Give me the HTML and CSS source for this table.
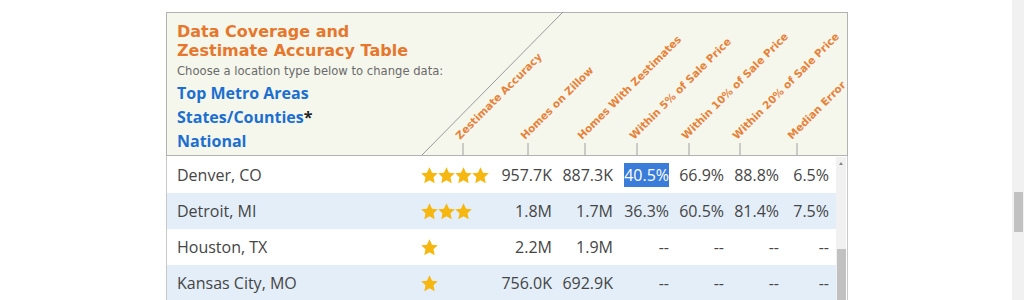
FILE: index.html
```html
<!DOCTYPE html>
<html lang="en">
<head>
<meta charset="utf-8">
<title>Data Coverage and Zestimate Accuracy Table</title>
<link rel="stylesheet" href="styles.css">
</head>
<body>
<div class="page">
  <main class="main">
    <section class="widget">
      <header class="head">
        <div class="intro">
          <h1 class="title">Data Coverage and<br>Zestimate Accuracy Table</h1>
          <p class="hint">Choose a location type below to change data:</p>
          <ul class="types">
            <li><a href="#">Top Metro Areas</a></li>
            <li><a href="#">States/Counties</a><span class="ast">*</span></li>
            <li><a href="#">National</a></li>
          </ul>
        </div>
        <svg class="colheads" width="680" height="142" viewBox="0 0 680 142">
          <line class="diag" x1="396" y1="-1" x2="255" y2="142"/>
          <g class="ticks">
            <line x1="296" y1="130" x2="296" y2="142"/>
            <line x1="361" y1="130" x2="361" y2="142"/>
            <line x1="418" y1="130" x2="418" y2="142"/>
            <line x1="470" y1="130" x2="470" y2="142"/>
            <line x1="522" y1="130" x2="522" y2="142"/>
            <line x1="573" y1="130" x2="573" y2="142"/>
            <line x1="630" y1="130" x2="630" y2="142"/>
          </g>
          <g class="labels">
            <text transform="translate(293 127) rotate(-45)">Zestimate Accuracy</text>
            <text transform="translate(358 127) rotate(-45)">Homes on Zillow</text>
            <text transform="translate(415 127) rotate(-45)">Homes With Zestimates</text>
            <text transform="translate(467 127) rotate(-45)">Within 5% of Sale Price</text>
            <text transform="translate(519 127) rotate(-45)">Within 10% of Sale Price</text>
            <text transform="translate(570 127) rotate(-45)">Within 20% of Sale Price</text>
            <text transform="translate(625 127) rotate(-45)">Median Error</text>
          </g>
        </svg>
      </header>
      <div class="body">
        <div class="rows">
          <div class="row">
            <span class="name">Denver, CO</span>
            <span class="stars">
              <svg class="star" viewBox="0 0 16 16"><polygon points="8,0.3 10.4,5.3 15.8,5.9 11.8,9.6 12.9,15.2 8,12.5 3.1,15.2 4.2,9.6 0.2,5.9 5.6,5.3"/></svg><svg class="star" viewBox="0 0 16 16"><polygon points="8,0.3 10.4,5.3 15.8,5.9 11.8,9.6 12.9,15.2 8,12.5 3.1,15.2 4.2,9.6 0.2,5.9 5.6,5.3"/></svg><svg class="star" viewBox="0 0 16 16"><polygon points="8,0.3 10.4,5.3 15.8,5.9 11.8,9.6 12.9,15.2 8,12.5 3.1,15.2 4.2,9.6 0.2,5.9 5.6,5.3"/></svg><svg class="star" viewBox="0 0 16 16"><polygon points="8,0.3 10.4,5.3 15.8,5.9 11.8,9.6 12.9,15.2 8,12.5 3.1,15.2 4.2,9.6 0.2,5.9 5.6,5.3"/></svg>
            </span>
            <span class="num">957.7K</span>
            <span class="num">887.3K</span>
            <span class="num"><span class="sel">40.5%</span></span>
            <span class="num">66.9%</span>
            <span class="num">88.8%</span>
            <span class="num">6.5%</span>
          </div>
          <div class="row alt">
            <span class="name">Detroit, MI</span>
            <span class="stars">
              <svg class="star" viewBox="0 0 16 16"><polygon points="8,0.3 10.4,5.3 15.8,5.9 11.8,9.6 12.9,15.2 8,12.5 3.1,15.2 4.2,9.6 0.2,5.9 5.6,5.3"/></svg><svg class="star" viewBox="0 0 16 16"><polygon points="8,0.3 10.4,5.3 15.8,5.9 11.8,9.6 12.9,15.2 8,12.5 3.1,15.2 4.2,9.6 0.2,5.9 5.6,5.3"/></svg><svg class="star" viewBox="0 0 16 16"><polygon points="8,0.3 10.4,5.3 15.8,5.9 11.8,9.6 12.9,15.2 8,12.5 3.1,15.2 4.2,9.6 0.2,5.9 5.6,5.3"/></svg>
            </span>
            <span class="num">1.8M</span>
            <span class="num">1.7M</span>
            <span class="num">36.3%</span>
            <span class="num">60.5%</span>
            <span class="num">81.4%</span>
            <span class="num">7.5%</span>
          </div>
          <div class="row">
            <span class="name">Houston, TX</span>
            <span class="stars">
              <svg class="star" viewBox="0 0 16 16"><polygon points="8,0.3 10.4,5.3 15.8,5.9 11.8,9.6 12.9,15.2 8,12.5 3.1,15.2 4.2,9.6 0.2,5.9 5.6,5.3"/></svg>
            </span>
            <span class="num">2.2M</span>
            <span class="num">1.9M</span>
            <span class="num">--</span>
            <span class="num">--</span>
            <span class="num">--</span>
            <span class="num">--</span>
          </div>
          <div class="row alt">
            <span class="name">Kansas City, MO</span>
            <span class="stars">
              <svg class="star" viewBox="0 0 16 16"><polygon points="8,0.3 10.4,5.3 15.8,5.9 11.8,9.6 12.9,15.2 8,12.5 3.1,15.2 4.2,9.6 0.2,5.9 5.6,5.3"/></svg>
            </span>
            <span class="num">756.0K</span>
            <span class="num">692.9K</span>
            <span class="num">--</span>
            <span class="num">--</span>
            <span class="num">--</span>
            <span class="num">--</span>
          </div>
        </div>
        <div class="vscroll">
          <span class="arrow"></span>
          <span class="thumb"></span>
        </div>
      </div>
    </section>
  </main>
  <div class="pagescroll"><span class="pthumb"></span></div>
</div>
</body>
</html>
```

FILE: styles.css
```css
* { box-sizing: border-box; }
html, body { margin: 0; padding: 0; background: #fff; }
body { font-family: "Open Sans", "DejaVu Sans", sans-serif; color: #444; }

.page {
  display: flex;
  height: 300px;
  overflow: hidden;
}
.main {
  flex: 1;
  padding: 12px 0 0 166px;
}

.widget {
  width: 682px;
  border-left: 1px solid #c8c8c8;
  border-right: 1px solid #c8c8c8;
  height: 300px;
}

.head {
  position: relative;
  height: 144px;
  margin: 0 -1px;
  border: 1px solid #b2b2b2;
  background: #f5f7ed;
  padding: 9px 0 0 10px;
}
.intro { position: relative; z-index: 1; }
.title {
  margin: 0;
  font-family: "DejaVu Sans", Verdana, sans-serif;
  font-weight: bold;
  font-size: 16px;
  line-height: 19px;
  color: #e6772c;
}
.hint {
  margin: 4px 0 0;
  font-family: "DejaVu Sans", Verdana, sans-serif;
  font-size: 11.6px;
  line-height: 14px;
  color: #6a6a6a;
}
.types {
  list-style: none;
  margin: 3px 0 0;
  padding: 0;
  font-family: "Open Sans", "DejaVu Sans", sans-serif;
  font-weight: bold;
  font-size: 16px;
  line-height: 24px;
}
.types a { color: #1c6fd1; text-decoration: none; }
.ast { color: #222; }

.colheads {
  position: absolute;
  left: 0;
  top: 0;
  overflow: visible;
}
.diag { stroke: #9a9a9a; stroke-width: 1; }
.ticks line { stroke: #a0a0a0; stroke-width: 1; }
.labels text {
  font-family: "DejaVu Sans", Verdana, sans-serif;
  font-weight: bold;
  font-size: 10.5px;
  fill: #e8823a;
}

.body {
  display: flex;
  padding-top: 1px;
}
.rows { flex: 1; }
.row {
  display: grid;
  grid-template-columns: 244px 70px 61px 61px 56px 55px 55px 50px 7px;
  align-items: center;
  height: 36px;
  padding-left: 10px;
  font-size: 16px;
  color: #454545;
}
.row.alt { background: #e3eef9; }
.num { text-align: right; white-space: nowrap; }
.stars { display: flex; gap: 0; align-items: center; }
.star { width: 17px; height: 17px; fill: #f5b710; }
.sel {
  background: #3a7cd9;
  color: #fff;
  padding: 1px 0;
}

.vscroll {
  width: 10px;
  margin-right: 1px;
  background: #f1f1f1;
  display: flex;
  flex-direction: column;
  align-items: center;
}
.arrow {
  width: 0;
  height: 0;
  margin-top: 5px;
  border-left: 2px solid transparent;
  border-right: 2px solid transparent;
  border-bottom: 3px solid #888;
}
.thumb {
  width: 9px;
  height: 60px;
  margin-top: 84px;
  background: #c1c1c1;
}

.pagescroll {
  width: 12px;
  background: #f1f1f1;
  display: flex;
  justify-content: center;
}
.pthumb {
  width: 9px;
  height: 40px;
  margin-top: 192px;
  background: #c1c1c1;
}
```
